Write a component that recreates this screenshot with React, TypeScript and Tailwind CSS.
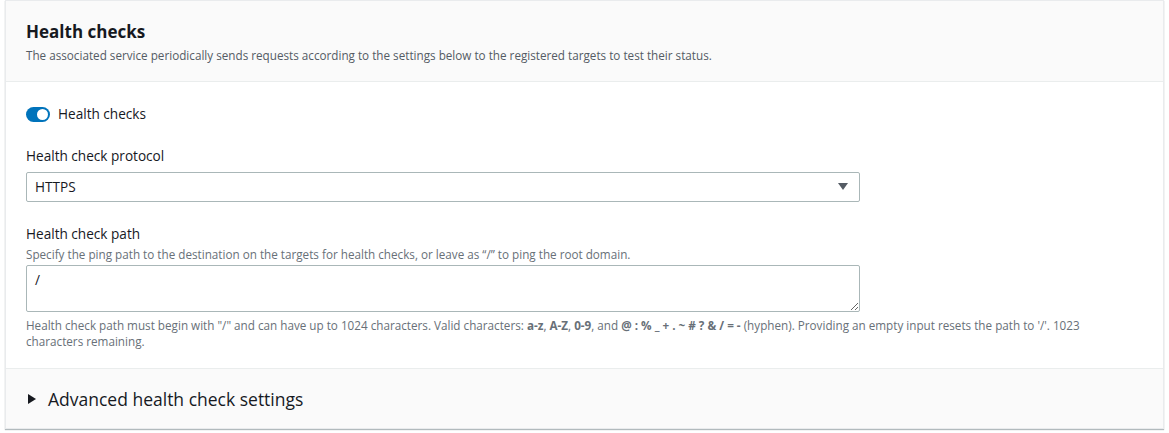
import React, { useState } from 'react';

export default function App() {
  const [enabled, setEnabled] = useState(true);

  return (
    <div className="min-h-screen bg-white px-[5px] pt-0 font-['Open_Sans',sans-serif] text-[#16191f]">
      <div className="border border-[#e9ebed] shadow-[0_1px_1px_rgba(0,28,36,0.3)]">
        {/* Header */}
        <div className="bg-[#fafafa] border-b border-[#eaeded] px-[20px] pt-[20px] pb-[18px]">
          <h2 className="text-[17px] font-bold leading-[22px]">Health checks</h2>
          <p className="mt-[4px] text-[11.7px] leading-[16px] text-[#545b64]">
            The associated service periodically sends requests according to the settings below to the registered targets to test their status.
          </p>
        </div>

        {/* Body */}
        <div className="bg-white px-[20px] pt-[21px] pb-[19px]">
          <label className="flex h-[22px] items-center gap-[8px] cursor-pointer">
            <button
              type="button"
              onClick={() => setEnabled(!enabled)}
              className={
                'relative h-[15px] w-[24px] rounded-full ' +
                (enabled ? 'bg-[#0073bb]' : 'bg-[#879596]')
              }
            >
              <span
                className={
                  'absolute top-[2px] h-[11px] w-[11px] rounded-full bg-white ' +
                  (enabled ? 'left-[11px]' : 'left-[2px]')
                }
              />
            </button>
            <span className="text-[13.6px] leading-[22px]">Health checks</span>
          </label>

          <div className="mt-[20px]">
            <div className="text-[13.6px] leading-[22px]">Health check protocol</div>
            <div className="mt-[5px] flex h-[30px] w-[834px] items-center justify-between rounded-[2px] border border-[#aab7b8] bg-white pl-[8px] pr-[10px]">
              <span className="text-[13.6px]">HTTPS</span>
              <svg width="12" height="12" viewBox="0 0 12 12">
                <path d="M1 2h10L6 9z" fill="#545b64" />
              </svg>
            </div>
          </div>

          <div className="mt-[21px]">
            <div className="text-[13.6px] leading-[22px]">Health check path</div>
            <div className="mt-[1px] text-[11.7px] leading-[16px] text-[#687078]">
              Specify the ping path to the destination on the targets for health checks, or leave as “/” to ping the root domain.
            </div>
            <textarea
              defaultValue="/"
              className="mt-[3px] block h-[47px] w-[834px] resize-y rounded-[2px] border border-[#aab7b8] px-[8px] py-[4px] text-[13.6px] leading-[20px] outline-none"
            />
            <p className="mt-[5px] max-w-[1090px] text-[11.7px] leading-[16px] text-[#687078]">
              Health check path must begin with "/" and can have up to 1024 characters. Valid characters: <b>a-z</b>, <b>A-Z</b>, <b>0-9</b>, and <b>@ : % _ + . ~ # ? &amp; / = -</b> (hyphen). Providing an empty input resets the path to '/'. 1023 characters remaining.
            </p>
          </div>
        </div>

        {/* Footer */}
        <div className="flex h-[60px] items-center gap-[11px] border-t border-[#eaeded] bg-[#fafafa] px-[21px]">
          <svg width="10" height="12" viewBox="0 0 10 12">
            <path d="M1 1l8 5-8 5z" fill="#16191f" />
          </svg>
          <span className="text-[17.5px] leading-[22px]">Advanced health check settings</span>
        </div>
      </div>
    </div>
  );
}
